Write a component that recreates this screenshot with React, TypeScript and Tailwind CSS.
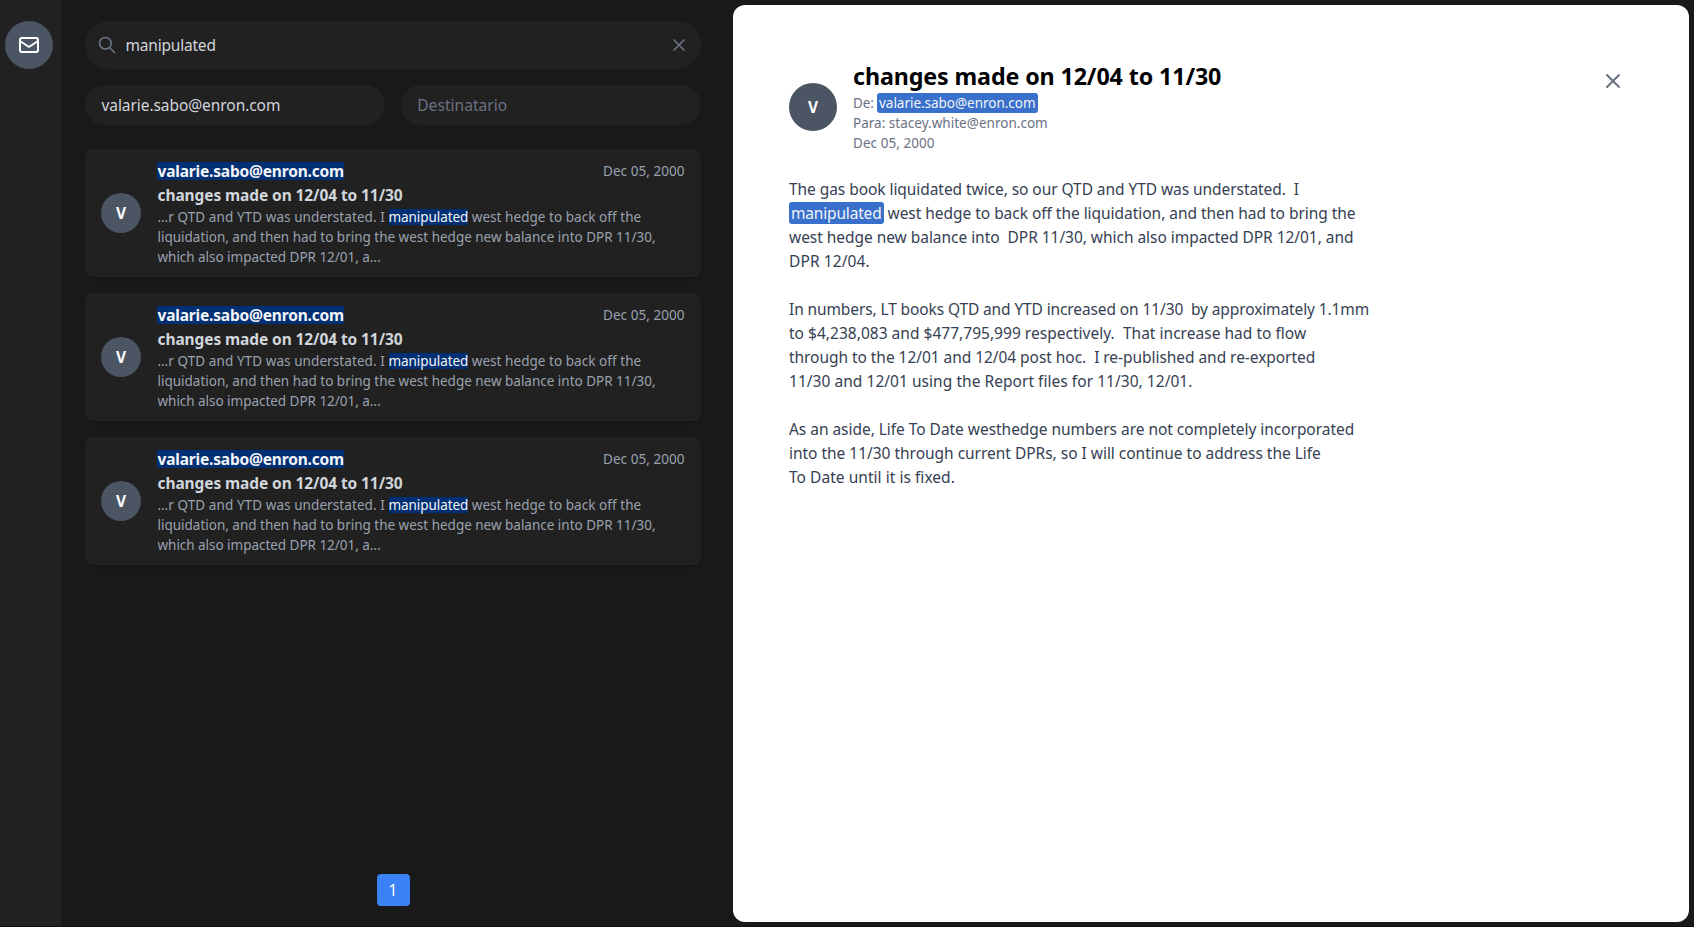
import type { ReactNode } from "react";

function XIcon({ className }: { className: string }) {
  return (
    <svg className={className} viewBox="0 0 24 24" fill="none" stroke="currentColor" strokeWidth="2" strokeLinecap="round" strokeLinejoin="round">
      <path d="M6 18L18 6M6 6l12 12" />
    </svg>
  );
}

function SearchIcon() {
  return (
    <svg className="size-5 text-gray-500" viewBox="0 0 24 24" fill="none" stroke="currentColor" strokeWidth="2" strokeLinecap="round" strokeLinejoin="round">
      <path d="M21 21l-6-6m2-5a7 7 0 11-14 0 7 7 0 0114 0z" />
    </svg>
  );
}

function MailIcon() {
  return (
    <svg className="size-6 text-white" viewBox="0 0 24 24" fill="none" stroke="currentColor" strokeWidth="2" strokeLinecap="round" strokeLinejoin="round">
      <path d="M3 8l7.89 5.26a2 2 0 002.22 0L21 8M5 19h14a2 2 0 002-2V7a2 2 0 00-2-2H5a2 2 0 00-2 2v10a2 2 0 002 2z" />
    </svg>
  );
}

function ListMark({ children, className }: { children: ReactNode; className: string }) {
  return <mark className={`inline-block bg-[#002f74] text-gray-100 ${className}`}>{children}</mark>;
}

function MailCard() {
  return (
    <article className="flex h-32 items-center gap-4 rounded-lg bg-[#212121] px-4 shadow">
      <div className="flex size-10 shrink-0 items-center justify-center rounded-full bg-[#4b5563] pt-px text-[15.5px] font-bold text-white">V</div>
      <div className="min-w-0 flex-1 whitespace-pre">
        <div className="flex h-6 items-center justify-between">
          <ListMark className="h-[18px] pl-[0.5px] text-[15.5px] leading-[18px] font-bold tracking-[-0.184px]">valarie.sabo@enron.com</ListMark>
          <span className="pr-[0.5px] text-[13.5px] tracking-[0.048px] text-gray-400">Dec 05, 2000</span>
        </div>
        <h3 className="pl-[0.5px] text-[15.5px] leading-6 font-bold tracking-[-0.094px] text-gray-300">changes made on 12/04 to 11/30</h3>
        <div className="pl-[0.5px] text-[13.5px] leading-5 text-gray-400">
          <p className="flex items-center">
            <span className="tracking-[0.08px]">…r QTD and YTD was understated. I </span>
            <ListMark className="h-4 leading-4 tracking-[-0.074px]">manipulated</ListMark>
            <span className="tracking-[0.048px]"> west hedge to back off the</span>
          </p>
          <p className="tracking-[-0.01px]">liquidation, and then had to bring the west hedge new balance into DPR 11/30,</p>
          <p className="tracking-[-0.032px]">which also impacted DPR 12/01, a...</p>
        </div>
      </div>
    </article>
  );
}

export default function App() {
  return (
    <div className="flex h-[927px] w-[1694px] overflow-hidden border-b border-[#110c0d] bg-[#191919] font-['Noto_Sans',sans-serif]">
      <aside className="w-[61px] shrink-0 bg-[#212121] pt-[21px] pl-[5px]">
        <button className="flex size-12 items-center justify-center rounded-full bg-[#4b5563]">
          <MailIcon />
        </button>
      </aside>

      <main className="flex w-[672px] shrink-0 flex-col px-6 pt-[21px] pr-8 pb-5">
        <div className="flex h-12 items-center rounded-full bg-[#212121] px-3">
          <SearchIcon />
          <span className="ml-2 flex-1 pt-0.5 pl-[0.5px] text-[15.5px] tracking-[-0.2px] text-gray-300">manipulated</span>
          <XIcon className="size-5 text-gray-500" />
        </div>
        <div className="mt-4 flex gap-4 text-[15.5px]">
          <div className="flex h-10 flex-1 items-center rounded-full bg-[#212121] px-4 pt-0.5 pl-[16.5px] tracking-[-0.07px] text-gray-300">valarie.sabo@enron.com</div>
          <div className="flex h-10 flex-1 items-center rounded-full bg-[#212121] px-4 pt-0.5 tracking-[0.048px] text-gray-500">Destinatario</div>
        </div>
        <div className="mt-6 flex flex-col gap-4">
          <MailCard />
          <MailCard />
          <MailCard />
        </div>
        <div className="mt-auto flex justify-center">
          <button className="h-8 w-[33px] rounded bg-[#3b82f6] pt-0.5 text-[15.5px] text-white">1</button>
        </div>
      </main>

      <section className="my-[5px] mr-[5px] mb-1 flex-1 rounded-xl bg-white px-14 pt-14">
        <header className="flex items-start justify-between">
          <div className="flex items-center gap-4">
            <div className="flex size-12 items-center justify-center rounded-full bg-[#4b5563] pt-px text-[15.5px] font-bold text-white">V</div>
            <div className="text-[13.5px] leading-5 whitespace-pre text-gray-500">
              <h1 className="h-8 text-[23.25px] leading-[30px] font-bold tracking-[-0.115px] text-black">changes made on 12/04 to 11/30</h1>
              <p className="flex">
                <span className="tracking-[-0.149px]">De: </span>
                <mark className="rounded-[3px] bg-[#3870cb] px-0.5 tracking-[-0.027px] text-gray-100">valarie.sabo@enron.com</mark>
              </p>
              <p className="tracking-[0.02px]">Para: stacey.white@enron.com</p>
              <p className="tracking-[0.048px]">Dec 05, 2000</p>
            </div>
          </div>
          <XIcon className="mt-2 mr-2 size-6 text-gray-500" />
        </header>
        <div className="mt-6 text-[15.5px] leading-6 whitespace-pre text-gray-700">
          <p className="tracking-[-0.062px]">The gas book liquidated twice, so our QTD and YTD was understated.  I</p>
          <p className="flex items-center">
            <mark className="h-[22px] rounded-[3px] bg-[#3870cb] px-0.5 leading-[22px] tracking-[-0.177px] text-gray-100">manipulated</mark>
            <span className="tracking-[-0.036px]"> west hedge to back off the liquidation, and then had to bring the</span>
          </p>
          <p className="tracking-[-0.04px]">west hedge new balance into  DPR 11/30, which also impacted DPR 12/01, and</p>
          <p className="tracking-[0.1px]">DPR 12/04.</p>
          <p className="mt-6 tracking-[-0.114px]">In numbers, LT books QTD and YTD increased on 11/30  by approximately 1.1mm</p>
          <p className="tracking-[0.024px]">to $4,238,083 and $477,795,999 respectively.  That increase had to flow</p>
          <p className="tracking-[-0.05px]">through to the 12/01 and 12/04 post hoc.  I re-published and re-exported</p>
          <p className="tracking-[0.04px]">11/30 and 12/01 using the Report files for 11/30, 12/01.</p>
          <p className="mt-6 tracking-[-0.038px]">As an aside, Life To Date westhedge numbers are not completely incorporated</p>
          <p className="tracking-[-0.022px]">into the 11/30 through current DPRs, so I will continue to address the Life</p>
          <p className="tracking-[0.04px]">To Date until it is fixed.</p>
        </div>
      </section>
    </div>
  );
}
